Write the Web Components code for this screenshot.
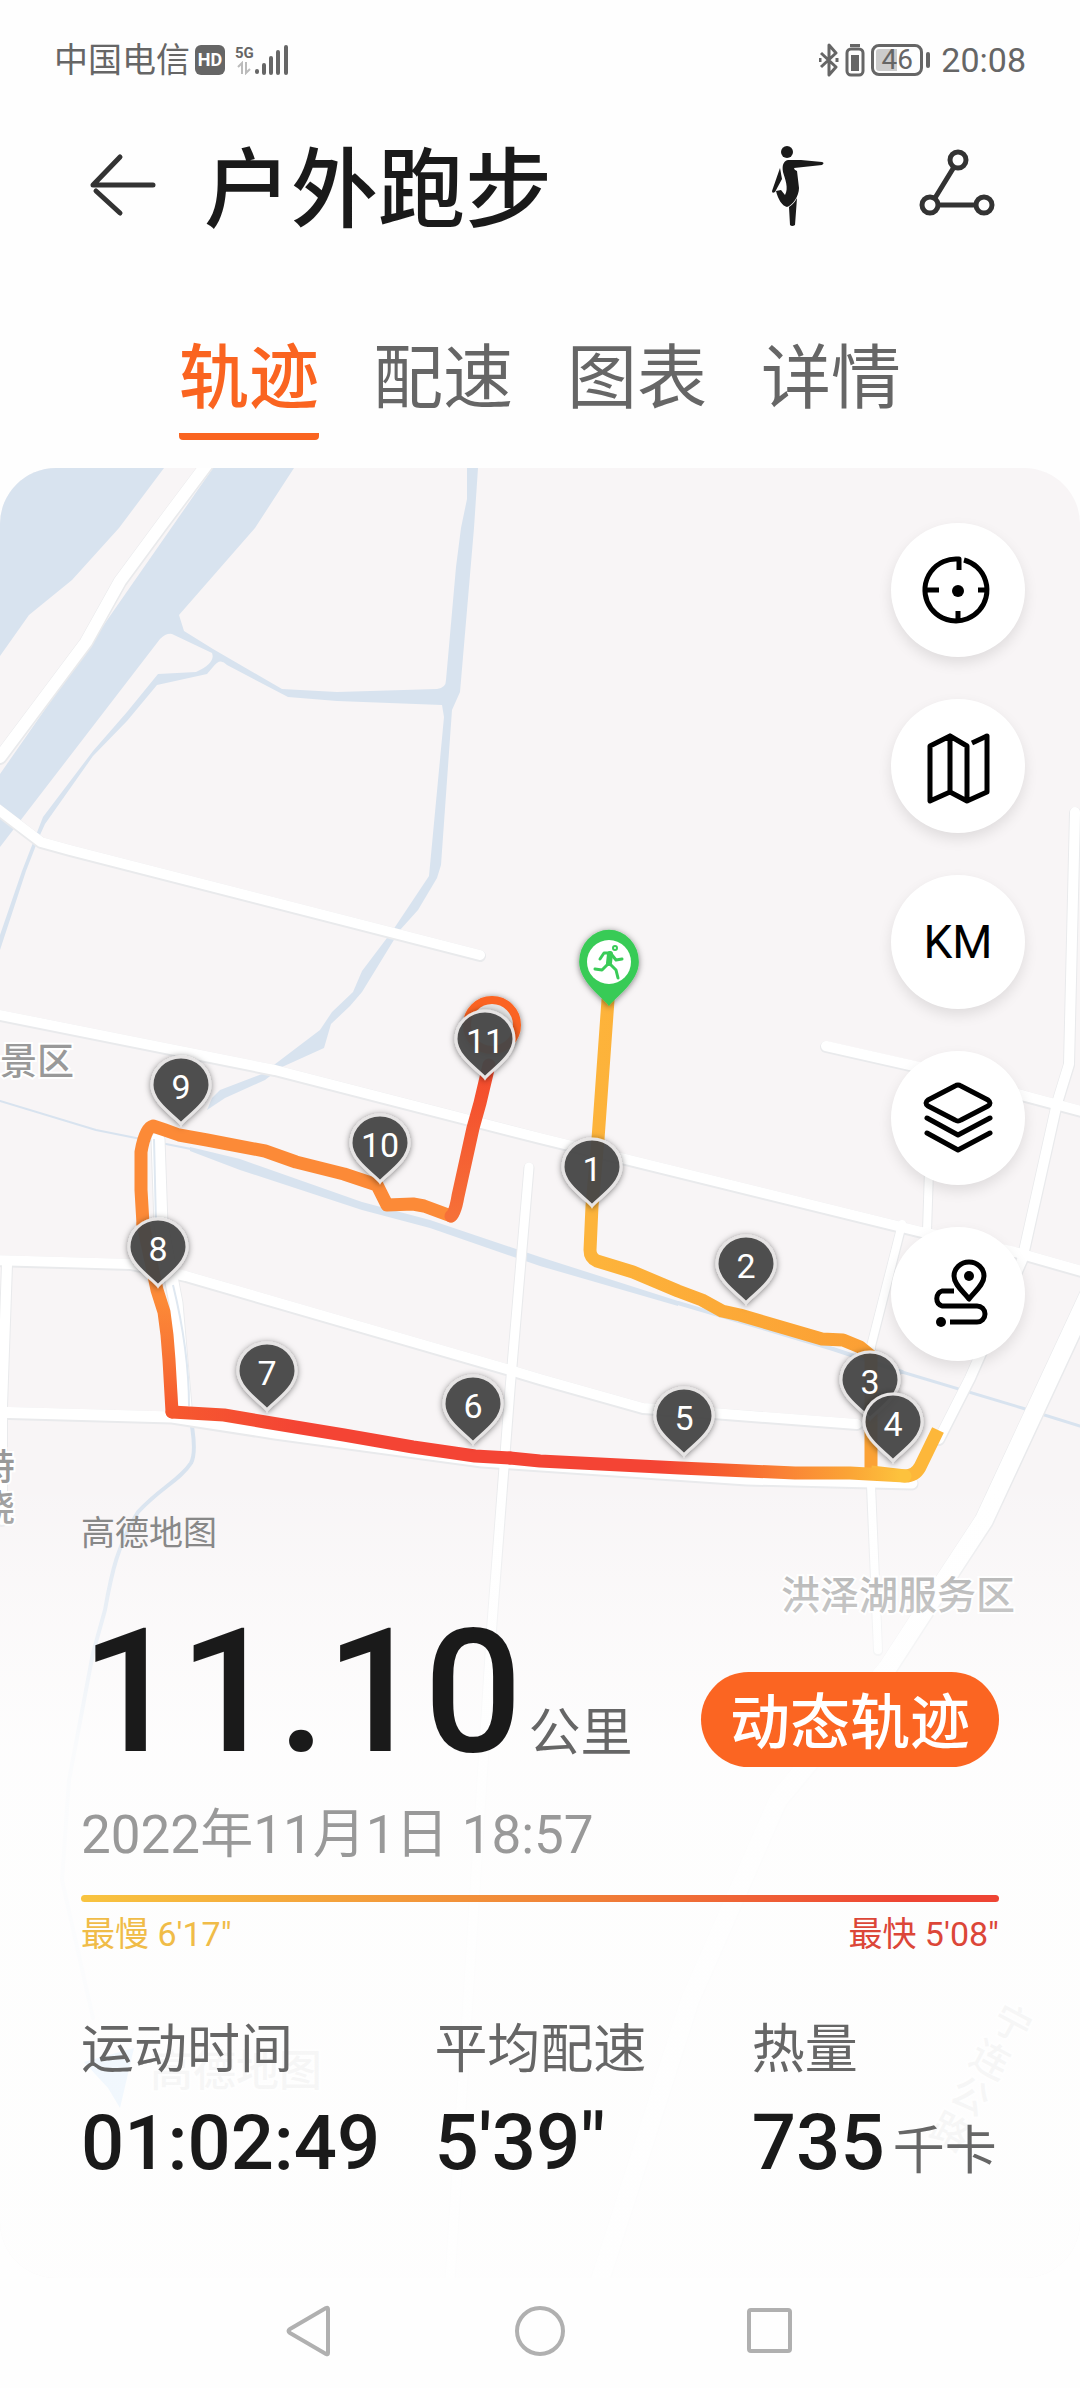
<!DOCTYPE html>
<html lang="zh-CN">
<head>
<meta charset="utf-8">
<meta name="viewport" content="width=device-width, initial-scale=1">
<title>户外跑步</title>
<style>
  body {
    margin: 0;
    background: #fefefe;
    color: #1a1a1a;
    font-family: Roboto, "Noto Sans CJK SC", sans-serif;
  }
</style>
</head>
<body>
<run-page>
  <status-bar slot="status" carrier="中国电信" time="20:08" battery="46"></status-bar>
  <page-header slot="header">户外跑步</page-header>
  <tab-strip slot="tabs" labels="轨迹,配速,图表,详情" active="0"></tab-strip>
  <track-stage slot="stage">
    <route-map slot="map"></route-map>
    <map-tools slot="tools"></map-tools>
    <run-summary slot="summary">
      <stat-item slot="stats" label="运动时间">01:02:49</stat-item>
      <stat-item slot="stats" label="平均配速" large>5'39"</stat-item>
      <stat-item slot="stats" label="热量" unit="千卡" large>735</stat-item>
    </run-summary>
  </track-stage>
  <system-nav slot="nav"></system-nav>
</run-page>

<script>
function attach(element, html) {
  const template = document.createElement("template");
  template.innerHTML = html;
  element.attachShadow({ mode: "open" });
  element.shadowRoot.appendChild(template.content.cloneNode(true));
}

class RunPage extends HTMLElement {
  constructor() {
    super();
    attach(this, `
      <style>
        :host {
          display: flex;
          flex-direction: column;
          min-height: 100vh;
        }
      </style>
      <slot name="status"></slot>
      <slot name="header"></slot>
      <slot name="tabs"></slot>
      <slot name="stage"></slot>
      <slot name="nav"></slot>
    `);
  }
}

class StatusBar extends HTMLElement {
  constructor() {
    super();
    attach(this, `
      <style>
        :host {
          display: flex;
          justify-content: space-between;
          align-items: center;
          height: 120px;
          padding: 0 54px;
          box-sizing: border-box;
          color: #666;
          font-size: 34px;
          line-height: 40px;
        }
        .group {
          display: flex;
          align-items: center;
        }
        .right {
          gap: 6px;
        }
        .hd {
          width: 30px;
          margin: 0 10px 0 5px;
          border-radius: 6px;
          background: #666;
          color: #fff;
          font-size: 18px;
          font-weight: 700;
          line-height: 30px;
          text-align: center;
        }
        .net {
          display: flex;
          flex-direction: column;
          align-items: center;
          font-size: 15px;
          font-weight: 700;
          line-height: 16px;
        }
        .battery {
          width: 52px;
          box-sizing: border-box;
          border: 3px solid #666;
          border-radius: 8px;
          background: linear-gradient(90deg, #ccc 50%, #fefefe 50%) content-box;
          padding: 2px;
          font-size: 28px;
          line-height: 22px;
          text-align: center;
        }
        .nub {
          width: 4px;
          height: 16px;
          margin: 0 5px 0 -3px;
          border-radius: 2px;
          background: #666;
        }
        svg { display: block; }
      </style>
      <div class="group">
        <span class="carrier"></span>
        <span class="hd">HD</span>
        <span class="net">5G
          <svg width="14" height="14" viewBox="0 0 14 14" stroke="#bbb" stroke-width="2" fill="none"><path d="M1 6l4-4v11M9 1v11l4-4"/></svg>
        </span>
        <svg width="35" height="32" viewBox="0 0 35 32" stroke="#666" stroke-width="4" stroke-linecap="round"><path d="M3 27v1M10 21v8M17 14v15M24 8v21M32 3v26"/></svg>
      </div>
      <div class="group right">
        <svg width="20" height="34" viewBox="0 0 20 34" stroke="#666" stroke-width="3" fill="none" stroke-linejoin="round"><path d="M2 10l15 14-7 8V2l7 8L2 24"/><path d="M1 15v4M18 15v4"/></svg>
        <svg width="20" height="34" viewBox="0 0 20 34"><rect x="5" y="1" width="10" height="3" fill="#666"/><rect x="2" y="6" width="16" height="26" rx="4" fill="none" stroke="#666" stroke-width="3"/><rect x="6" y="12" width="8" height="16" fill="#666"/></svg>
        <span class="battery"></span>
        <span class="nub"></span>
        <time></time>
      </div>
    `);
  }
  connectedCallback() {
    this.shadowRoot.querySelector(".carrier").textContent = this.getAttribute("carrier");
    this.shadowRoot.querySelector(".battery").textContent = this.getAttribute("battery");
    this.shadowRoot.querySelector("time").textContent = this.getAttribute("time");
  }
}

class PageHeader extends HTMLElement {
  constructor() {
    super();
    attach(this, `
      <style>
        :host {
          display: flex;
          align-items: center;
          height: 130px;
          padding: 0 84px 0 82px;
        }
        h1 {
          flex: 1;
          margin: 12px 0 0 42px;
          font-size: 87px;
          font-weight: 500;
          line-height: 120px;
        }
        button {
          padding: 0;
          border: 0;
          background: none;
          cursor: pointer;
        }
        .stretch {
          margin-right: 90px;
        }
        svg { display: block; }
      </style>
      <button aria-label="返回">
        <svg width="80" height="80" viewBox="0 0 80 80" fill="none" stroke="#333" stroke-width="5" stroke-linecap="round" stroke-linejoin="round"><path d="M71 40H11L38 12M14 46L38 68"/></svg>
      </button>
      <h1><slot></slot></h1>
      <button class="stretch" aria-label="拉伸">
        <svg width="60" height="84" viewBox="0 0 60 84" fill="#1a1a1a">
          <circle cx="19" cy="9" r="6"/>
          <path d="M20 17h13l21 2q3 1 0 3l-28 3q0 2 3 3l2 17c0 8-6 17-12 19-5-1-9-8-11-16l5-1 4 5c4-7 0-16-2-23-1-6 0-11 5-12z"/>
          <path d="M12 25l2 11-7 13q-3 2-3-1z"/>
          <path d="M29 55l-2 27q-3 2-5 0l-1-18q5-3 8-9z"/>
        </svg>
      </button>
      <button aria-label="分享">
        <svg width="78" height="84" viewBox="0 0 78 84" fill="none" stroke="#333" stroke-width="5">
          <circle cx="40" cy="17" r="8"/><circle cx="12" cy="62" r="8"/><circle cx="66" cy="62" r="8"/>
          <path d="M36 24L17 55M20 62h38"/>
        </svg>
      </button>
    `);
  }
}

class TabStrip extends HTMLElement {
  constructor() {
    super();
    attach(this, `
      <style>
        :host { display: block; }
        nav {
          display: flex;
          justify-content: center;
          gap: 54px;
          padding: 83px 0 28px;
        }
        button {
          padding: 0 0 14px;
          border: 0;
          background: none;
          color: #666;
          font: inherit;
          font-size: 70px;
          line-height: 93px;
          cursor: pointer;
        }
        .active {
          border-radius: 4px;
          background: linear-gradient(#fa6420, #fa6420) bottom / 100% 7px no-repeat;
          color: #fa6420;
          font-weight: 500;
        }
      </style>
      <nav></nav>
    `);
  }
  connectedCallback() {
    const nav = this.shadowRoot.querySelector("nav");
    this.getAttribute("labels").split(",").forEach((label, index) => {
      const button = document.createElement("button");
      button.textContent = label;
      if (index == this.getAttribute("active")) {
        button.classList.add("active");
      }
      button.addEventListener("click", () => {
        nav.querySelectorAll("button").forEach((other) => other.classList.toggle("active", other === button));
      });
      nav.appendChild(button);
    });
  }
}

class TrackStage extends HTMLElement {
  constructor() {
    super();
    attach(this, `
      <style>
        :host {
          display: block;
          position: relative;
          overflow: hidden;
          border-radius: 56px;
        }
        .map {
          position: absolute;
          inset: 0;
        }
        .content {
          position: relative;
          display: flex;
          flex-direction: column;
        }
      </style>
      <div class="map"><slot name="map"></slot></div>
      <div class="content">
        <slot name="tools"></slot>
        <slot name="summary"></slot>
      </div>
    `);
  }
}

// kilometre marks, drawn in this order so that 4 covers 3
const MARKS = [
  [1, 592, 1169], [2, 746, 1266], [3, 870, 1382], [4, 893, 1424],
  [5, 684, 1418], [6, 473, 1406], [7, 267, 1373], [8, 158, 1249],
  [9, 181, 1087], [10, 380, 1145], [11, 485, 1041]
];

class RouteMap extends HTMLElement {
  constructor() {
    super();
    attach(this, `
      <style>
        :host {
          display: block;
          height: 100%;
          background: #f8f5f6;
        }
        svg {
          display: block;
          width: 100%;
          height: 100%;
        }
        .edge path { stroke: #e9eaec; }
        .road path { stroke: #fff; }
        .edge path, .road path, .stream path, .route path {
          fill: none;
          stroke-linecap: round;
          stroke-linejoin: round;
        }
        .stream path { stroke: #d8e3ef; }
        .route path { stroke-width: 13; }
        .place {
          fill: #999;
          stroke: #fff;
          stroke-width: 4px;
          paint-order: stroke;
          font-weight: 500;
        }
        .mark {
          fill: #fff;
          font-size: 34px;
          text-anchor: middle;
        }
      </style>
      <svg viewBox="0 468 1080 1812" preserveAspectRatio="xMidYMin slice">
        <defs>
          <linearGradient id="east" gradientUnits="userSpaceOnUse" x1="660" y1="0" x2="900" y2="0">
            <stop offset="0" stop-color="#f44434"/><stop offset=".28" stop-color="#f6602f"/>
            <stop offset=".5" stop-color="#fa8035"/><stop offset=".8" stop-color="#fba636"/>
            <stop offset="1" stop-color="#fdc23d"/>
          </linearGradient>
          <linearGradient id="west" gradientUnits="userSpaceOnUse" x1="0" y1="1412" x2="0" y2="1300">
            <stop offset="0" stop-color="#f6592f"/><stop offset=".5" stop-color="#f87535"/>
            <stop offset="1" stop-color="#fc8a37"/>
          </linearGradient>
          <linearGradient id="south" gradientUnits="userSpaceOnUse" x1="172" y1="0" x2="300" y2="0">
            <stop offset="0" stop-color="#f6592f"/><stop offset="1" stop-color="#f44434"/>
          </linearGradient>
          <linearGradient id="finish" gradientUnits="userSpaceOnUse" x1="0" y1="1216" x2="0" y2="1070">
            <stop offset="0" stop-color="#f67038"/><stop offset="1" stop-color="#f44a2c"/>
          </linearGradient>
          <linearGradient id="first" gradientUnits="userSpaceOnUse" x1="590" y1="0" x2="870" y2="0">
            <stop offset="0" stop-color="#fdb43b"/><stop offset="1" stop-color="#fb9f34"/>
          </linearGradient>
          <filter id="shade" x="-30%" y="-30%" width="160%" height="160%">
            <feDropShadow dx="0" dy="1" stdDeviation="3" flood-color="#000" flood-opacity=".5"/>
          </filter>
          <path id="drop" d="M0 37C-5 30-29 16-29-2A29 28 0 0 1 29-2C29 16 5 30 0 37z"/>
          <g id="roads">
            <path stroke-width="12" d="M210 460L162 524 120 581 86 642 0 757"/>
            <path stroke-width="10" d="M-5 807L41 842 70 850 480 955"/>
            <path stroke-width="10" d="M-5 1014L275 1070 540 1138 926 1233 1015 1252 1085 1272"/>
            <path stroke-width="10" d="M826 1046L919 1067 1029 1097 1085 1112"/>
            <path stroke-width="10" d="M1075 812L1069 1064 1057 1103 1022 1260 970 1378 939 1439"/>
            <path stroke-width="8" d="M929 1170L927 1231M902 1224L871 1346V1485L878 1650"/>
            <path stroke-width="18" d="M1090 1292L1037 1406 984 1520 923 1613 888 1667 778 1800 690 2000 600 2280"/>
            <path stroke-width="10" d="M-5 1260L131 1264 186 1276 510 1370 540 1379 643 1408 700 1412 857 1424"/>
            <path stroke-width="10" d="M7 1264L2 1406V1520"/>
            <path stroke-width="11" d="M-5 1412L172 1417 275 1433 482 1461 747 1479 912 1483"/>
            <path stroke-width="13" d="M158 1139L161 1224 176 1303 185 1406"/>
            <path stroke-width="9" d="M529 1167L510 1389 503 1480 492 1623 482 1780 450 2280"/>
          </g>
        </defs>

        <g fill="#d8e3ef">
          <path d="M0 468H164L119 528 72 580 29 615 0 656z"/>
          <path d="M213 468H294L255 528 179 615 184 631 213 649 282 689 337 692 437 689Q446 688 446 680L456 567 461 528 467 499V468H478L474 528 460 692 452 710 441 865 437 878 418 910 400 930 362 992 350 1006 331 1024 324 1048 282 1067 265 1080 225 1098 207 1110 212 1098 220 1090 262 1074 320 1030 332 1012 353 992 362 971 393 930 429 876 444 717 442 705 337 701 288 697 227 665Q220 657 213 667L207 674 157 685 127 721 93 756 45 824 40 835 26 871 0 950V935L22 871 43 817 93 751 127 712 158 674 196 672Q216 663 212 653L172 634Q166 633 160 639L0 847V774z"/>
          <path d="M190 1147L240 1159 362 1202 430 1220 540 1257 678 1301V1306L540 1266 430 1228 362 1210 240 1170 190 1151z"/>
        </g>
        <g class="stream">
          <path stroke-width="2" d="M0 1101L96 1130 196 1150"/>
          <path stroke-width="4" d="M678 1303L833 1349 902 1372"/>
          <path stroke-width="3" d="M902 1372L1022 1408 1080 1426"/>
          <path stroke-width="4" d="M188 1406Q198 1450 191 1463C180 1480 160 1488 138 1512 118 1545 112 1570 105 1610L93 1653 69 1780 62 1880 93 2018"/>
        </g>
        <g class="edge" transform="translate(0 1)"></g>
        <g class="road"></g>
        <path d="M154 1139L156 1224M173 1285Q189 1350 189 1406" fill="none" stroke="#dfe8f1" stroke-width="2"/>

        <text class="place" x="0" y="1075" font-size="37">景区</text>
        <text class="place" x="15" y="1480" font-size="36" text-anchor="end">特</text>
        <text class="place" x="15" y="1521" font-size="36" text-anchor="end">晓</text>
        <text class="place" x="781" y="1609" font-size="39">洪泽湖服务区</text>
        <g class="place" font-size="38" text-anchor="middle">
          <text transform="translate(1006 2036) rotate(28)">宁</text>
          <text transform="translate(984 2072) rotate(28)">连</text>
          <text transform="translate(964 2108) rotate(28)">公</text>
          <text transform="translate(944 2144) rotate(28)">路</text>
        </g>
        <path d="M84 2062l50-14-14 60-12-20z" fill="#5aa9f5"/>
        <text class="place" x="150" y="2086" font-size="43">高德地图</text>

        <g class="route">
          <path stroke="#fba235" d="M871 1356V1468"/>
          <path stroke="url(#first)" d="M608 1000L598 1139 592 1206 590 1250Q590 1258 597 1261L633 1272 678 1291 702 1300 722 1311 740 1315 822 1339 843 1340 860 1347 871 1356"/>
          <path stroke="#fdb73a" d="M871 1472L905 1476Q915 1476 920 1467L938 1430" style="stroke-linecap: butt"/>
          <path stroke="url(#east)" d="M510 1458L540 1461 680 1468 795 1473 850 1473 905 1476"/>
          <path stroke="url(#south)" d="M172 1412L224 1415 265 1422 344 1435 413 1447 475 1456 510 1458"/>
          <path stroke="url(#west)" d="M172 1412L169 1360 167 1335 164 1312 157 1290 143 1224"/>
          <path stroke="#fc8a37" d="M143 1224L141 1190V1152Q145 1128 153 1126L165 1130 179 1135 207 1140 265 1151 296 1162 344 1174 377 1185 387 1205 413 1204 424 1206 451 1216"/>
          <path stroke="url(#finish)" d="M451 1216Q455 1214 458 1196L473 1128 480 1103 489 1065"/>
        </g>

        <g filter="url(#shade)">
          <circle cx="492" cy="1025" r="25" fill="#e4e4e4" stroke="#fb6420" stroke-width="8"/>
        </g>
        <g transform="translate(609 964)">
          <use href="#drop" fill="#39cb57" transform="scale(1.03 1.14)" filter="url(#shade)"/>
          <circle cx="0" cy="-2" r="22" fill="#fff"/>
          <g fill="none" stroke="#39cb57" stroke-linecap="round" stroke-linejoin="round">
            <circle cx="6" cy="-16" r="1" stroke-width="4"/>
            <path stroke-width="6" d="M1-10L0-1"/>
            <path stroke-width="3" d="M1-11L-5-11-9-5M3-9L7-4 13-5M0-1L7 6 9 14M-1 0L-7 6-14 5"/>
          </g>
        </g>
        <g class="marks"></g>
      </svg>
    `);
  }
  connectedCallback() {
    const roads = this.shadowRoot.querySelector("#roads");
    this.shadowRoot.querySelector(".road").innerHTML = roads.innerHTML;
    const edge = this.shadowRoot.querySelector(".edge");
    edge.innerHTML = roads.innerHTML;
    edge.querySelectorAll("path").forEach((path) => {
      path.setAttribute("stroke-width", Number(path.getAttribute("stroke-width")) + 2);
    });
    this.shadowRoot.querySelector(".marks").innerHTML = MARKS.map(([km, x, y]) => `
      <g transform="translate(${x} ${y})">
        <use href="#drop" fill="#484848" fill-opacity=".92" stroke="#e6e4e4" stroke-width="3" filter="url(#shade)"/>
        <text class="mark" y="12">${km}</text>
      </g>
    `).join("");
  }
}

class MapTools extends HTMLElement {
  constructor() {
    super();
    attach(this, `
      <style>
        :host {
          display: flex;
          flex-direction: column;
          align-items: flex-end;
          gap: 42px;
          padding: 55px 55px 0;
        }
        button {
          display: grid;
          place-items: center;
          width: 134px;
          height: 134px;
          padding: 0;
          border: 0;
          border-radius: 50%;
          background: #fff;
          box-shadow: 0 6px 14px rgba(0, 0, 0, 0.1);
          color: #000;
          font: 46px/56px Roboto, sans-serif;
          cursor: pointer;
        }
        svg {
          display: block;
          width: 134px;
          height: 134px;
          fill: none;
          stroke: #000;
          stroke-width: 5;
          stroke-linecap: round;
          stroke-linejoin: round;
        }
        .dot {
          fill: #000;
          stroke: none;
        }
      </style>
      <button aria-label="定位">
        <svg viewBox="0 0 134 134"><path stroke-linecap="butt" d="M73 37A31 31 0 1 1 67 36h1v11M36 67h12M98 67H87M67 98V88"/><circle class="dot" cx="67" cy="68" r="6"/></svg>
      </button>
      <button aria-label="地图类型">
        <svg viewBox="0 0 134 134"><path d="M39 47L59 37 76 47V102L59 93 39 102zM59 37V93M76 102L96 93V37"/><path stroke-linecap="butt" d="M81 44L96 37"/></svg>
      </button>
      <button>KM</button>
      <button aria-label="图层">
        <svg viewBox="0 0 134 134"><path d="M64 35Q67 33 70 35L97 49Q101 52 97 55L70 69Q67 71 64 69L37 55Q33 52 37 49zM36 67L67 84 99 67M36 82L67 99 99 82"/></svg>
      </button>
      <button aria-label="路线">
        <svg viewBox="0 0 134 134"><path d="M78 72C73 65 63 58 63 49A15 14 0 0 1 93 49C93 58 83 65 78 72z"/><path stroke-linecap="butt" d="M63 64H51A8 8 0 0 0 51 79H86A8 8 0 0 1 86 95H59"/><circle class="dot" cx="78" cy="49" r="5"/><circle class="dot" cx="50" cy="95" r="5"/></svg>
      </button>
    `);
  }
}

class RunSummary extends HTMLElement {
  constructor() {
    super();
    attach(this, `
      <style>
        :host {
          display: block;
          margin-top: 118px;
          padding: 32px 81px 91px;
          background: linear-gradient(rgba(254, 254, 254, 0), rgba(254, 254, 254, 0.5) 150px, rgba(254, 254, 254, 0.88) 270px, rgba(254, 254, 254, 0.92) 350px);
        }
        .source {
          color: #888;
          font-size: 34px;
          line-height: 44px;
        }
        .row {
          display: flex;
          justify-content: space-between;
          align-items: flex-end;
          margin-top: 62px;
        }
        .total {
          display: flex;
          align-items: baseline;
        }
        .distance {
          font-size: 173px;
          font-weight: 500;
          line-height: 150px;
        }
        .unit {
          margin-left: 6px;
          color: #666;
          font-size: 52px;
          line-height: 64px;
        }
        button {
          width: 298px;
          height: 95px;
          padding: 8px 0 0;
          border: 0;
          border-radius: 48px;
          background: #fb6522;
          color: #fff;
          font: inherit;
          font-size: 60px;
          font-weight: 500;
          line-height: 87px;
          cursor: pointer;
        }
        .date {
          display: block;
          margin-top: 36px;
          color: #999;
          font-size: 53px;
          line-height: 64px;
        }
        .bar {
          height: 7px;
          margin-top: 28px;
          border-radius: 4px;
          background: linear-gradient(90deg, #f8c440, #f08038 55%, #ee4434 90%);
        }
        .scale {
          display: flex;
          justify-content: space-between;
          margin-top: 12px;
          font-size: 34px;
          line-height: 40px;
        }
        .slow { color: #f0bc48; }
        .fast { color: #dc4638; }
        .stats {
          display: grid;
          grid-template-columns: 353fr 317fr 247fr;
          margin-top: 64px;
        }
      </style>
      <div class="source">高德地图</div>
      <div class="row">
        <div class="total"><span class="distance">11.10</span><span class="unit">公里</span></div>
        <button>动态轨迹</button>
      </div>
      <time class="date" datetime="2022-11-01T18:57">2022年11月1日 18:57</time>
      <div class="bar"></div>
      <div class="scale"><span class="slow">最慢 6'17"</span><span class="fast">最快 5'08"</span></div>
      <div class="stats"><slot name="stats"></slot></div>
    `);
  }
}

class StatItem extends HTMLElement {
  constructor() {
    super();
    attach(this, `
      <style>
        :host {
          display: block;
          white-space: nowrap;
        }
        .label, .unit {
          color: #666;
          font-size: 53px;
          line-height: 64px;
        }
        .value {
          display: flex;
          align-items: baseline;
          margin-top: 17px;
          font-size: 76px;
          font-weight: 500;
          line-height: 88px;
        }
        :host([large]) .value {
          font-size: 78px;
        }
        .unit {
          margin-left: 8px;
          font-size: 52px;
          font-weight: 400;
        }
      </style>
      <div class="label"></div>
      <div class="value"><slot></slot></div>
    `);
  }
  connectedCallback() {
    this.shadowRoot.querySelector(".label").textContent = this.getAttribute("label");
    if (this.hasAttribute("unit")) {
      const unit = document.createElement("span");
      unit.classList.add("unit");
      unit.textContent = this.getAttribute("unit");
      this.shadowRoot.querySelector(".value").appendChild(unit);
    }
  }
}

class SystemNav extends HTMLElement {
  constructor() {
    super();
    attach(this, `
      <style>
        :host {
          display: flex;
          justify-content: center;
          align-items: center;
          gap: 174px;
          height: 106px;
          padding-bottom: 2px;
        }
        button {
          padding: 0;
          border: 0;
          background: none;
          cursor: pointer;
        }
        svg {
          display: block;
          fill: none;
          stroke: #b0b0b0;
          stroke-width: 4;
          stroke-linejoin: round;
        }
      </style>
      <button aria-label="返回"><svg width="56" height="56" viewBox="0 0 56 56"><path d="M46 6V50Q46 52 44 51L8 30Q5 28 8 26L44 5Q46 4 46 6z"/></svg></button>
      <button aria-label="主页"><svg width="56" height="56" viewBox="0 0 56 56"><circle cx="28" cy="28" r="23"/></svg></button>
      <button aria-label="最近任务"><svg width="56" height="56" viewBox="0 0 56 56"><rect x="7" y="7" width="41" height="41" rx="2"/></svg></button>
    `);
  }
}

window.customElements.define("run-page", RunPage);
window.customElements.define("status-bar", StatusBar);
window.customElements.define("page-header", PageHeader);
window.customElements.define("tab-strip", TabStrip);
window.customElements.define("track-stage", TrackStage);
window.customElements.define("route-map", RouteMap);
window.customElements.define("map-tools", MapTools);
window.customElements.define("run-summary", RunSummary);
window.customElements.define("stat-item", StatItem);
window.customElements.define("system-nav", SystemNav);
</script>
</body>
</html>
